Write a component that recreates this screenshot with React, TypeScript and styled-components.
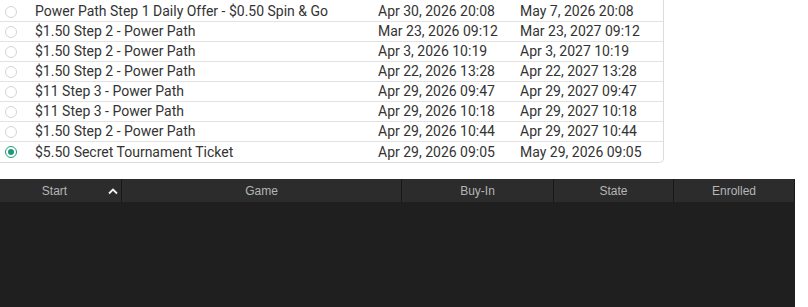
import React, { FC } from "react";
import styled, { createGlobalStyle } from "styled-components";

type Ticket = { name: string; issued: string; expires: string; selected?: boolean };

const tickets: Ticket[] = [
  { name: "Power Path Step 1 Daily Offer - $0.50 Spin & Go", issued: "Apr 30, 2026 20:08", expires: "May 7, 2026 20:08" },
  { name: "$1.50 Step 2 - Power Path", issued: "Mar 23, 2026 09:12", expires: "Mar 23, 2027 09:12" },
  { name: "$1.50 Step 2 - Power Path", issued: "Apr 3, 2026 10:19", expires: "Apr 3, 2027 10:19" },
  { name: "$1.50 Step 2 - Power Path", issued: "Apr 22, 2026 13:28", expires: "Apr 22, 2027 13:28" },
  { name: "$11 Step 3 - Power Path", issued: "Apr 29, 2026 09:47", expires: "Apr 29, 2027 09:47" },
  { name: "$11 Step 3 - Power Path", issued: "Apr 29, 2026 10:18", expires: "Apr 29, 2027 10:18" },
  { name: "$1.50 Step 2 - Power Path", issued: "Apr 29, 2026 10:44", expires: "Apr 29, 2027 10:44" },
  { name: "$5.50 Secret Tournament Ticket", issued: "Apr 29, 2026 09:05", expires: "May 29, 2026 09:05", selected: true },
];

const columns = [
  { label: "Start", width: 122, sorted: true },
  { label: "Game", width: 280 },
  { label: "Buy-In", width: 152 },
  { label: "State", width: 120 },
  { label: "Enrolled", width: 121 },
];

const GlobalStyle = createGlobalStyle`
  html, body {
    margin: 0;
    padding: 0;
    background: #ffffff;
  }
`;

export default function App() {
  return (
    <Page>
      <GlobalStyle />
      <TicketList>
        {tickets.map((t, i) => (
          <TicketRow key={i}>
            <RadioCell>
              <Radio $checked={!!t.selected} />
            </RadioCell>
            <NameCell>{t.name}</NameCell>
            <DateCell>{t.issued}</DateCell>
            <DateCell>{t.expires}</DateCell>
          </TicketRow>
        ))}
      </TicketList>

      <Lobby>
        <HeaderBar>
          {columns.map((c) => (
            <HeaderCell key={c.label} $width={c.width}>
              <HeaderLabel $sorted={!!c.sorted}>{c.label}</HeaderLabel>
              {c.sorted && <SortArrow />}
            </HeaderCell>
          ))}
        </HeaderBar>
        <LobbyBody />
      </Lobby>
    </Page>
  );
}

const SortArrow: FC = () => (
  <ArrowSvg width="10" height="7" viewBox="0 0 10 7">
    <path d="M1 5.5 L5 1.5 L9 5.5" fill="none" stroke="#f2f2f2" strokeWidth="1.8" />
  </ArrowSvg>
);

const Page = styled.div`
  width: 808px;
  height: 307px;
  display: flex;
  flex-direction: column;
  background: #ffffff;
  overflow: hidden;
`;

const TicketList = styled.div`
  width: 663px;
  padding-top: 2px;
  border-right: 1px solid #dcdcdc;
  border-bottom: 1px solid #dcdcdc;
  border-bottom-right-radius: 5px;
  background: #ffffff;
  font-family: Roboto, "Noto Sans", sans-serif;
  font-size: 14px;
  color: #333333;
`;

const TicketRow = styled.div`
  display: flex;
  align-items: center;
  height: 20px;
  box-sizing: border-box;
  border-bottom: 1px solid #e2e2e2;
  &:last-child {
    border-bottom: none;
  }
`;

const RadioCell = styled.div`
  width: 35px;
  display: flex;
  align-items: center;
  padding-left: 5px;
  box-sizing: border-box;
`;

const Radio = styled.span<{ $checked: boolean }>`
  width: 12px;
  height: 12px;
  box-sizing: border-box;
  border-radius: 50%;
  border: 1px solid ${(p) => (p.$checked ? "#1e9a7a" : "#d4d4d4")};
  display: flex;
  align-items: center;
  justify-content: center;
  &::after {
    content: "";
    width: 6px;
    height: 6px;
    border-radius: 50%;
    background: #1e9a7a;
    display: ${(p) => (p.$checked ? "block" : "none")};
  }
`;

const NameCell = styled.div`
  width: 343px;
  white-space: nowrap;
  line-height: 19px;
`;

const DateCell = styled.div`
  width: 142px;
  white-space: nowrap;
  line-height: 19px;
`;

const Lobby = styled.div`
  margin-top: 16px;
  width: 795px;
  flex: 1;
  display: flex;
  flex-direction: column;
  background: #1f1f1f;
`;

const HeaderBar = styled.div`
  display: flex;
  height: 23px;
  background: #2c2c2c;
  font-family: "Liberation Sans", Arial, sans-serif;
  font-size: 12px;
  color: #b5b5b5;
`;

const HeaderCell = styled.div<{ $width: number }>`
  width: ${(p) => p.$width}px;
  box-sizing: border-box;
  border-right: 1px solid #181818;
  display: flex;
  align-items: center;
  position: relative;
`;

const HeaderLabel = styled.span<{ $sorted: boolean }>`
  flex: 1;
  text-align: center;
  padding-right: ${(p) => (p.$sorted ? "12px" : "0")};
`;

const ArrowSvg = styled.svg`
  position: absolute;
  right: 3px;
  top: 9px;
`;

const LobbyBody = styled.div`
  flex: 1;
  background: #1f1f1f;
`;
